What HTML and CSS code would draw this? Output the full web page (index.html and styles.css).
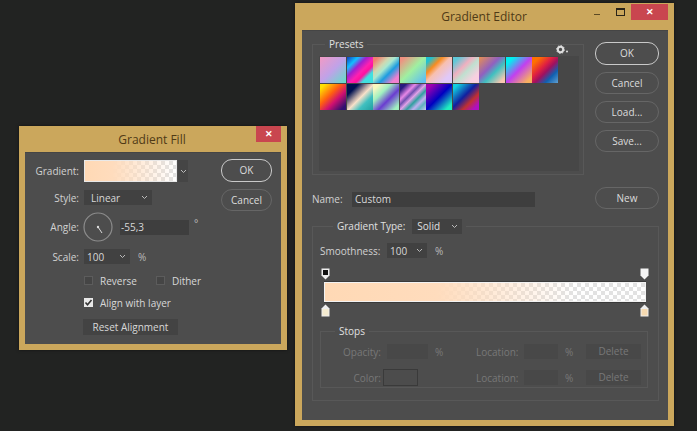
FILE: index.html
```html
<!DOCTYPE html>
<html lang="en">
<head>
    <meta charset="UTF-8">
    <title>Gradient Fill</title>
    <link rel="stylesheet" href="styles.css">
</head>
<body>

<div class="window fill-window">
    <div class="titlebar">
        <span class="title">Gradient Fill</span>
        <span class="close">&#10005;</span>
    </div>
    <div class="panel fill-panel">
        <div class="fill-form">
            <div class="row row-gradient">
                <label>Gradient:</label>
                <div class="ramp ramp-small"></div>
                <span class="ramp-arrow"><svg width="7" height="5" viewBox="0 0 7 5"><path d="M1 1l2.500 2.500L6 1" fill="none" stroke="#bbb"/></svg></span>
            </div>
            <div class="row row-style">
                <label>Style:</label>
                <div class="select select-style">Linear<svg width="7" height="5" viewBox="0 0 7 5"><path d="M1 1l2.500 2.500L6 1" fill="none" stroke="#bbb"/></svg></div>
            </div>
            <div class="row row-angle">
                <label>Angle:</label>
                <div class="dial"><svg width="30" height="30" viewBox="0 0 30 30"><circle cx="15" cy="15" r="14" fill="none" stroke="#8c8c8c" stroke-width="1.200"/><path d="M15 15l4 6" stroke="#ddd" stroke-width="1"/><circle cx="15" cy="15" r="1.200" fill="#ddd"/></svg></div>
                <div class="field field-angle">-55,3</div>
                <span class="unit unit-degree">°</span>
            </div>
            <div class="row row-scale">
                <label>Scale:</label>
                <div class="select select-num">100<svg width="7" height="5" viewBox="0 0 7 5"><path d="M1 1l2.500 2.500L6 1" fill="none" stroke="#bbb"/></svg></div>
                <span class="unit">%</span>
            </div>
            <div class="checks">
                <span class="check"><i class="box"></i>Reverse</span>
                <span class="check"><i class="box"></i>Dither</span>
            </div>
            <div class="checks">
                <span class="check"><i class="box box-on"><svg width="9" height="9" viewBox="0 0 9 9"><path d="M1.500 4.500l2 2.200L7.500 2" fill="none" stroke="#333" stroke-width="1.600"/></svg></i>Align with layer</span>
            </div>
            <div class="reset">Reset Alignment</div>
        </div>
        <div class="buttons fill-buttons">
            <div class="btn btn-main">OK</div>
            <div class="btn">Cancel</div>
        </div>
    </div>
</div>

<div class="window editor-window">
    <div class="titlebar titlebar-editor">
        <span class="title">Gradient Editor</span>
        <span class="win-min"></span>
        <span class="win-max"></span>
        <span class="close close-wide">&#10005;</span>
    </div>
    <div class="panel editor-panel">
        <div class="editor-top">
            <fieldset class="group presets">
                <legend>Presets</legend>
                <span class="gear"><svg width="13" height="9" viewBox="0 0 13 9"><circle cx="4.500" cy="4.500" r="2.700" fill="none" stroke="#ddd" stroke-width="2"/><circle cx="4.500" cy="4.500" r="3.900" fill="none" stroke="#ddd" stroke-width="1" stroke-dasharray="1.500 1.500"/><circle cx="11" cy="6.500" r="1" fill="#ddd"/></svg></span>
                <div class="swatches">
                    <i class="g1"></i><i class="g2"></i><i class="g3"></i><i class="g4"></i><i class="g5"></i><i class="g6"></i><i class="g7"></i><i class="g8"></i><i class="g9"></i>
                    <i class="g10"></i><i class="g11"></i><i class="g12"></i><i class="g13"></i><i class="g14"></i><i class="g15"></i>
                </div>
            </fieldset>
            <div class="buttons editor-buttons">
                <div class="btn btn-main">OK</div>
                <div class="btn">Cancel</div>
                <div class="btn">Load...</div>
                <div class="btn">Save...</div>
            </div>
        </div>
        <div class="name-row">
            <label>Name:</label>
            <div class="field field-name">Custom</div>
            <div class="btn btn-new">New</div>
        </div>
        <fieldset class="group type-group">
            <legend class="type-legend">
                <span>Gradient Type:</span>
                <div class="select select-solid">Solid<svg width="7" height="5" viewBox="0 0 7 5"><path d="M1 1l2.500 2.500L6 1" fill="none" stroke="#bbb"/></svg></div>
            </legend>
            <div class="smooth-row">
                <label>Smoothness:</label>
                <div class="select select-num select-smooth">100<svg width="7" height="5" viewBox="0 0 7 5"><path d="M1 1l2.500 2.500L6 1" fill="none" stroke="#bbb"/></svg></div>
                <span class="unit">%</span>
            </div>
            <div class="ramp-wrap">
                <div class="stops-line">
                    <svg width="9" height="12" viewBox="0 0 9 12"><path d="M.5.500h8v7L4.500 11.500.5 7.500z" fill="#eee"/><rect x="2" y="2" width="5" height="5" fill="#111"/></svg>
                    <svg width="9" height="12" viewBox="0 0 9 12"><path d="M.5.500h8v7L4.500 11.500.5 7.500z" fill="#f4f4f4"/></svg>
                </div>
                <div class="ramp ramp-big"></div>
                <div class="stops-line stops-bottom">
                    <svg width="9" height="13" viewBox="0 0 9 13"><path d="M.5 12.500h8v-8L4.500.5.5 4.500z" fill="#eee"/><rect x="1.500" y="5" width="6" height="6.500" fill="#f5ecd0"/></svg>
                    <svg width="9" height="13" viewBox="0 0 9 13"><path d="M.5 12.500h8v-8L4.500.5.5 4.500z" fill="#eee"/><rect x="1.500" y="5" width="6" height="6.500" fill="#f5d9b0"/></svg>
                </div>
            </div>
            <fieldset class="group stops">
                <legend>Stops</legend>
                <div class="stop-row">
                    <label class="dim stop-label">Opacity:</label>
                    <div class="field field-dim field-opacity"></div>
                    <span class="dim unit-stop">%</span>
                    <label class="dim loc-label">Location:</label>
                    <div class="field field-dim field-loc"></div>
                    <span class="dim unit-stop">%</span>
                    <div class="delete">Delete</div>
                </div>
                <div class="stop-row stop-row-color">
                    <label class="dim stop-label stop-label-color">Color:</label>
                    <div class="color-well"></div>
                    <label class="dim loc-label loc-label-color">Location:</label>
                    <div class="field field-dim field-loc"></div>
                    <span class="dim unit-stop">%</span>
                    <div class="delete">Delete</div>
                </div>
            </fieldset>
        </fieldset>
    </div>
</div>

</body>
</html>
```

FILE: styles.css
```css
body {
    margin: 0;
    width: 697px;
    height: 431px;
    overflow: hidden;
    position: relative;
    background-color: #222322;
    font-family: "Open Sans", sans-serif;
    font-size: 10px;
    color: #d8d8d8;
}
label {
    color: #d2d2d2;
}

/* windows */
.window {
    position: absolute;
    box-sizing: border-box;
    display: flex;
    flex-direction: column;
    background-color: #cba75c;
    padding: 0 6px 6px;
    box-shadow: 0 0 3px rgba(0,0,0,0.5);
}
.fill-window {
    left: 19px;
    top: 126px;
    width: 268px;
    height: 224px;
}
.editor-window {
    left: 295px;
    top: 3px;
    width: 379px;
    height: 423px;
    padding-left: 7px;
}
.titlebar {
    height: 26px;
    flex: none;
    display: flex;
    align-items: center;
    justify-content: center;
    position: relative;
}
.titlebar-editor {
    height: 27px;
}
.title {
    font-size: 12px;
    color: #4f3a16;
    margin-right: 2px;
}
.close {
    position: absolute;
    right: 0;
    top: 0;
    width: 25px;
    height: 16px;
    background-color: #c9464f;
    color: #fff;
    font-size: 9px;
    font-weight: bold;
    line-height: 16px;
    text-align: center;
}
.close-wide {
    width: 37px;
    right: 0;
    top: 1px;
}
.win-min {
    position: absolute;
    left: 292px;
    top: 11px;
    width: 6px;
    height: 1px;
    background-color: #5c4a24;
}
.win-max {
    position: absolute;
    left: 314px;
    top: 5px;
    width: 7px;
    height: 5px;
    border: 1px solid #2a2418;
    border-top-width: 2px;
}
.panel {
    flex: 1;
    background-color: #4d4d4d;
    box-shadow: inset 0 1px 0 #454545;
}

/* gradient fill dialog */
.fill-panel {
    display: flex;
    justify-content: space-between;
}
.fill-form {
    display: flex;
    flex-direction: column;
}
.row {
    display: flex;
    align-items: center;
}
.row label {
    width: 54px;
    margin-right: 5px;
    text-align: right;
}
.row-gradient {
    margin-top: 8px;
}
.row-style {
    margin-top: 8px;
}
.row-angle {
    margin-top: 7px;
}
.row-scale {
    margin-top: 7px;
}
.ramp {
    border: 1px solid #e9e9e9;
    box-sizing: border-box;
    background:
        linear-gradient(90deg, #ffd9b5 0%, #ffdcbd 30%, rgba(255,225,200,0) 100%),
        conic-gradient(#e2e2e2 25%, #fff 0 50%, #e2e2e2 0 75%, #fff 0) 0 0 / 8px 8px;
}
.ramp-small {
    width: 93px;
    height: 22px;
}
.ramp-arrow {
    width: 10px;
    height: 22px;
    margin-left: 1px;
    background-color: #454545;
    display: flex;
    align-items: center;
    justify-content: center;
}
.select {
    display: flex;
    align-items: center;
    justify-content: space-between;
    box-sizing: border-box;
    background-color: #414141;
    padding: 0 4px 0 7px;
    height: 15px;
}
.select-style {
    width: 68px;
}
.select-num {
    width: 46px;
    padding-left: 3px;
}
.dial {
    width: 30px;
    height: 30px;
    margin-left: -1px;
    margin-right: 7px;
}
.field {
    box-sizing: border-box;
    background-color: #3e3e3e;
    padding-left: 1px;
    height: 15px;
    line-height: 15px;
}
.field-angle {
    width: 69px;
}
.unit {
    margin-left: 8px;
    color: #bbb;
}
.unit-degree {
    margin-top: -9px;
    margin-left: 5px;
}
.checks {
    display: flex;
    gap: 19px;
    margin-left: 59px;
    margin-top: 9px;
    height: 13px;
}
.row-scale + .checks {
    margin-top: 10px;
}
.check {
    display: flex;
    align-items: center;
}
.box {
    width: 9px;
    height: 9px;
    box-sizing: border-box;
    background-color: #454545;
    border: 1px solid #5c5c5c;
    margin-right: 7px;
}
.box-on {
    background-color: #e8e8e8;
    border: 0;
    line-height: 0;
}
.reset {
    margin-left: 58px;
    margin-top: 10px;
    width: 95px;
    height: 16px;
    line-height: 16px;
    text-align: center;
    background-color: #434343;
}
.buttons {
    display: flex;
    flex-direction: column;
    flex: none;
}
.btn {
    box-sizing: border-box;
    height: 22px;
    line-height: 20px;
    text-align: center;
    border: 1.500px solid #666;
    border-radius: 11px;
    color: #dcdcdc;
}
.btn-main {
    border: 1.500px solid #c9c9c9;
    height: 23px;
    line-height: 20px;
}
.fill-buttons {
    width: 51px;
    gap: 7px;
    margin: 7px 9px 0 0;
}

/* gradient editor */
.editor-panel {
    display: flex;
    flex-direction: column;
    padding: 0 7px 0 10px;
}
.editor-top {
    display: flex;
    align-items: flex-start;
    margin-top: 7px;
}
.group {
    margin: 0;
    padding: 0;
    min-width: 0;
    box-sizing: border-box;
    border: 1px solid #585858;
}
.group legend {
    padding: 0 4px;
    margin-left: 12px;
    font-size: 10px;
    line-height: 14px;
    color: #e0e0e0;
}
.presets {
    width: 272px;
    height: 138px;
    position: relative;
}
.gear {
    position: absolute;
    right: 12px;
    top: -6px;
    line-height: 0;
    padding: 0 2px;
    background-color: #4d4d4d;
}
.swatches {
    box-sizing: border-box;
    margin: 5px 4px 0 6px;
    width: 260px;
    height: 115px;
    padding: 1px 0 0 1px;
    background-color: #474747;
    display: grid;
    grid-template-columns: repeat(9, 26px);
    grid-auto-rows: 26px;
    gap: .5px;
    align-content: start;
}
.g1 { background: linear-gradient(135deg, #f29ac4, #c0a2e8 50%, #5fe0c8); }
.g2 { background: linear-gradient(135deg, #0f3fc0, #12bfff 22%, #a020d0 38%, #ff20b0 55%, #ff10a0 66%, #40e0e0 78%); }
.g3 { background: linear-gradient(135deg, #f08070 10%, #d0d8b0 32%, #a8e8d0 44%, #1c9ce0 62%, #f080d0 85%); }
.g4 { background: linear-gradient(135deg, #f09080 8%, #a0f0a0 48%, #60c0f0 92%); }
.g5 { background: linear-gradient(135deg, #20c0d0 12%, #f88c20 32%, #f8c0b0 48%, #e0c8f8 80%); }
.g6 { background: linear-gradient(135deg, #60c8d8 12%, #f0b0c0 38%, #c0e0d0 54%, #f8d0e0 80%); }
.g7 { background: linear-gradient(135deg, #e89050, #9060c0 40%, #40c0c0 60%, #f8c8b0 90%); }
.g8 { background: linear-gradient(135deg, #00f0f0 15%, #c040f0 50%, #f8b060 88%); }
.g9 { background: linear-gradient(135deg, #ff7000 15%, #e02040 40%, #a01060 55%, #1060b0 75%, #60a0d0); }
.g10 { background: linear-gradient(135deg, #ffe000 10%, #ff6010 40%, #d01070 62%, #301070 90%); }
.g11 { background: linear-gradient(135deg, #001050 22%, #b0a0a0 42%, #f8e0c8 52%, #40c0c0 72%, #20a0a0); }
.g12 { background: linear-gradient(135deg, #f8f8c0 12%, #a0f0c0 34%, #6a3cd0 60%, #a0f0c0 90%); }
.g13 { background: linear-gradient(135deg, #2a1a80 12%, #e888e8 30%, #7050b0 40%, #e0a0e8 50%, #30a0a0 62%, #c0b0f0 74%, #60b0c0 84%, #c8c8f0); }
.g14 { background: linear-gradient(135deg, #a000b0 12%, #0000c0 50%, #20f0c0 88%); }
.g15 { background: linear-gradient(135deg, #10d0e0 10%, #1020a0 45%, #c03030 68%, #b010c0 88%); }
.editor-buttons {
    width: 64px;
    gap: 7px;
    margin: 5px 0 0 11px;
}
.name-row {
    display: flex;
    align-items: center;
    margin-top: 12px;
    height: 22px;
}
.name-row label {
    width: 40px;
    margin-top: 2px;
}
.field-name {
    width: 183px;
    padding-left: 3px;
    margin-top: 2px;
}
.btn-new {
    width: 64px;
    margin-left: 60px;
}
.type-group {
    width: 347px;
    height: 182px;
    margin-top: 10px;
    padding: 0 0 0 7px;
}
.type-group > legend.type-legend {
    display: flex;
    align-items: center;
    gap: 7px;
    margin-left: 13px;
    line-height: 15px;
}
.select-solid {
    width: 50px;
    padding-left: 5px;
}
.smooth-row {
    display: flex;
    align-items: center;
    margin-top: 9px;
}
.smooth-row label {
    width: 67px;
}
.select-smooth {
    width: 40px;
}
.ramp-wrap {
    width: 328px;
    margin-top: 10px;
    margin-left: 1px;
}
.stops-line {
    display: flex;
    justify-content: space-between;
    line-height: 0;
    height: 13px;
}
.stops-bottom {
    height: 13px;
    margin-top: 2px;
}
.ramp-big {
    width: 322px;
    height: 20px;
    margin: 1px 0 0 3px;
    border-color: #f2f2f2;
    box-shadow: 0 -1px 0 #3a3a3a, 0 1px 0 #3a3a3a;
    background:
        linear-gradient(90deg, #ffd9b5 0%, #ffdcbd 35%, rgba(255,225,200,0) 78%),
        conic-gradient(#e2e2e2 25%, #fff 0 50%, #e2e2e2 0 75%, #fff 0) 0 0 / 8px 8px;
}
.stops {
    width: 328px;
    height: 64px;
    margin-top: 7px;
}
.stops legend {
    margin-left: 14px;
}
.dim {
    color: #787878;
}
.stop-row {
    display: flex;
    align-items: center;
    margin-top: 6px;
    height: 15px;
}
.stop-row-color {
    margin-top: 10px;
    height: 17px;
}
.stop-label {
    width: 60px;
    text-align: right;
}
.stop-label-color {
    width: 60px;
}
.field-dim {
    background-color: #484848;
}
.field-opacity {
    width: 41px;
    margin-left: 6px;
}
.unit-stop {
    margin-left: 7px;
    width: 10px;
}
.loc-label {
    margin-left: 31px;
    width: 44px;
}
.loc-label-color {
    margin-left: 58px;
}
.field-loc {
    width: 34px;
    margin-left: 4px;
}
.delete {
    width: 55px;
    height: 15px;
    line-height: 15px;
    margin-left: 11px;
    text-align: center;
    background-color: #484848;
    color: #787878;
}
.color-well {
    width: 35px;
    height: 17px;
    margin-left: 2px;
    box-sizing: border-box;
    background-color: #4c4c4c;
    border: 1px solid #3a3a3a;
}
```
